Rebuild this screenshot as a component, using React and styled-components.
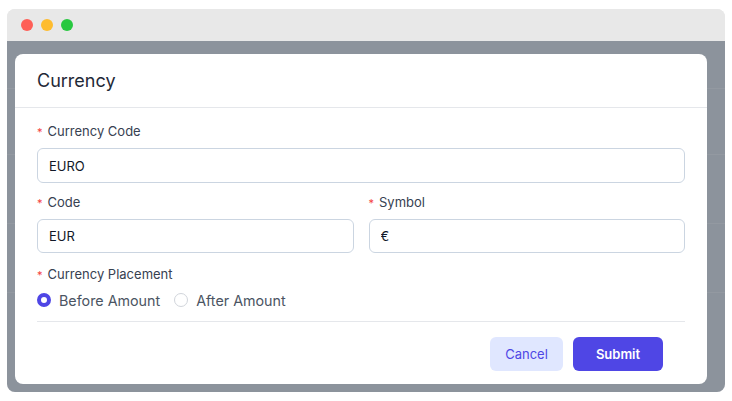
import styled, { createGlobalStyle } from "styled-components";

const GlobalStyle = createGlobalStyle`
  * { box-sizing: border-box; }
  body {
    margin: 0;
    background: #ffffff;
    font-family: Inter, "Noto Sans", "Liberation Sans", sans-serif;
  }
`;

const Window = styled.div`
  margin: 9px 7px;
  width: 718px;
  height: 383px;
  border-radius: 8px;
  overflow: hidden;
  display: flex;
  flex-direction: column;
  background: #e8e8e8;
`;

const TitleBar = styled.div`
  height: 32px;
  flex: none;
  display: flex;
  align-items: center;
  gap: 8px;
  padding-left: 14px;
  background: #e8e8e8;
`;

const Dot = styled.span`
  width: 12px;
  height: 12px;
  border-radius: 50%;
  background: ${(p) => p.color};
`;

const Screen = styled.div`
  position: relative;
  flex: 1;
  background: #eef0f3;
`;

const BgRow = styled.div`
  height: ${(p) => p.h}px;
  border-bottom: 1px solid #ffffff;
`;

const Overlay = styled.div`
  position: absolute;
  inset: 0;
  background: rgba(75, 85, 99, 0.6);
  padding: 13px 18px 8px 8px;
  display: flex;
`;

const Modal = styled.div`
  flex: 1;
  background: #ffffff;
  border-radius: 8px;
  display: flex;
  flex-direction: column;
`;

const Header = styled.div`
  height: 54px;
  flex: none;
  display: flex;
  align-items: center;
  padding: 0 22px;
  border-bottom: 1px solid #e5e7eb;
`;

const Title = styled.h2`
  margin: 0;
  font-size: 18px;
  font-weight: 400;
  color: #1f2937;
`;

const Body = styled.div`
  padding: 13px 22px 0;
`;

const Row = styled.div`
  display: grid;
  grid-template-columns: 1fr 1fr;
  column-gap: 15px;
`;

const Field = styled.div`
  display: flex;
  flex-direction: column;
  margin-bottom: ${(p) => p.mb || 0}px;
`;

const Label = styled.label`
  display: flex;
  align-items: center;
  height: 20px;
  margin-bottom: ${(p) => p.mb || 7}px;
  font-size: 13px;
  color: #374151;
`;

const Star = styled.span`
  color: #f43f3f;
  font-size: 11px;
  margin-right: 5px;
  position: relative;
  top: 1px;
`;

const Input = styled.input`
  height: ${(p) => p.h || 35}px;
  width: 100%;
  border: 1px solid #cbd5e1;
  border-radius: 6px;
  padding: 0 11px;
  font: inherit;
  font-size: 13px;
  color: #111827;
  background: #ffffff;
  outline: none;
`;

const RadioGroup = styled.div`
  display: flex;
  align-items: center;
  height: 20px;
`;

const RadioOption = styled.label`
  display: flex;
  align-items: center;
  gap: 8px;
  margin-right: 14px;
  font-size: 14.3px;
  color: #4b5563;
`;

const RadioCircle = styled.span`
  width: 14px;
  height: 14px;
  border-radius: 50%;
  background: #ffffff;
  border: ${(p) => (p.checked ? "4px solid #4f46e5" : "1px solid #d1d5db")};
`;

const Divider = styled.div`
  height: 1px;
  background: #e5e7eb;
  margin-top: 11px;
`;

const Footer = styled.div`
  display: flex;
  justify-content: flex-end;
  gap: 10px;
  padding: 15px 44px 0 22px;
`;

const Button = styled.button`
  height: 34px;
  width: ${(p) => p.w}px;
  border: none;
  border-radius: 6px;
  font: inherit;
  font-size: 13px;
  font-weight: ${(p) => (p.primary ? 600 : 400)};
  color: ${(p) => (p.primary ? "#ffffff" : "#4f46e5")};
  background: ${(p) => (p.primary ? "#4f46e5" : "#e0e7ff")};
`;

const Radio = ({ checked, children }) => (
  <RadioOption>
    <RadioCircle checked={checked} />
    {children}
  </RadioOption>
);

export default function App() {
  return (
    <>
      <GlobalStyle />
      <Window>
        <TitleBar>
          <Dot color="#fe5f57" />
          <Dot color="#febc2e" />
          <Dot color="#28c840" />
        </TitleBar>
        <Screen>
          <BgRow h={48} />
          <BgRow h={66} />
          <BgRow h={69} />
          <BgRow h={69} />
          <Overlay>
            <Modal>
              <Header>
                <Title>Currency</Title>
              </Header>
              <Body>
                <Field mb={9}>
                  <Label>
                    <Star>*</Star>Currency Code
                  </Label>
                  <Input defaultValue="EURO" />
                </Field>
                <Row>
                  <Field mb={11}>
                    <Label>
                      <Star>*</Star>Code
                    </Label>
                    <Input h={34} defaultValue="EUR" />
                  </Field>
                  <Field mb={11}>
                    <Label>
                      <Star>*</Star>Symbol
                    </Label>
                    <Input h={34} defaultValue="€" />
                  </Field>
                </Row>
                <Field>
                  <Label mb={6}>
                    <Star>*</Star>Currency Placement
                  </Label>
                  <RadioGroup>
                    <Radio checked>Before Amount</Radio>
                    <Radio>After Amount</Radio>
                  </RadioGroup>
                </Field>
                <Divider />
              </Body>
              <Footer>
                <Button w={73}>Cancel</Button>
                <Button w={90} primary>
                  Submit
                </Button>
              </Footer>
            </Modal>
          </Overlay>
        </Screen>
      </Window>
    </>
  );
}
